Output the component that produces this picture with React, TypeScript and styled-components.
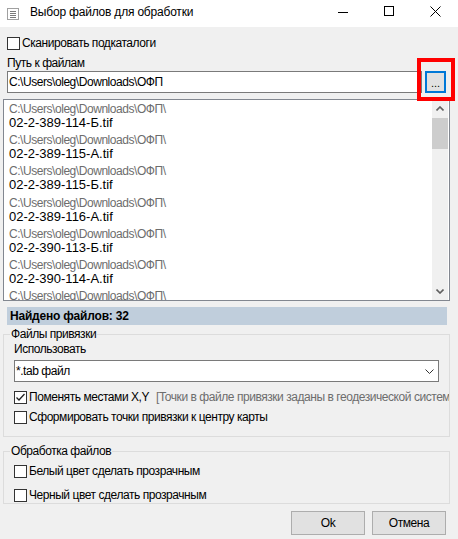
import React from 'react';
import styled, { createGlobalStyle } from 'styled-components';

const Global = createGlobalStyle`
  html, body { margin: 0; padding: 0; background: #f0f0f0; }
  body {
    font-family: 'Liberation Sans', Arial, sans-serif;
    font-size: 12px;
    color: #000;
    letter-spacing: -0.45px;
  }
  * { box-sizing: border-box; }
`;

const Window = styled.div`
  position: relative;
  width: 458px;
  height: 539px;
  background: #f0f0f0;
  overflow: hidden;
  display: flex;
  flex-direction: column;
`;

const TitleBar = styled.div`
  height: 27px;
  background: #fff;
  display: flex;
  align-items: flex-start;
  flex: none;
`;

const TitleIcon = styled.svg`
  flex: none;
  margin: 8px 0 0 7px;
`;

const TitleText = styled.div`
  flex: 1;
  margin: 5px 0 0 11px;
  line-height: 15px;
  font-size: 12px;
  letter-spacing: -0.2px;
`;

const WinButton = styled.div`
  width: 46px;
  height: 22px;
  display: flex;
  align-items: center;
  justify-content: center;
  flex: none;
`;

const Body = styled.div`
  flex: 1;
  display: flex;
  flex-direction: column;
  padding: 9px 8px 0 3px;
`;

const CheckRow = styled.div<{ $indent?: number; $top?: number }>`
  display: flex;
  align-items: center;
  height: 15px;
  gap: 2px;
  margin-left: ${(p) => p.$indent ?? 0}px;
  margin-top: ${(p) => p.$top ?? 0}px;
  white-space: nowrap;
`;

const Box = styled.div`
  width: 13px;
  height: 13px;
  flex: none;
  border: 1px solid #333;
  background: #fff;
  display: flex;
  align-items: center;
  justify-content: center;
`;

const WideRow = styled(CheckRow)`
  margin-right: -10px;
  overflow: hidden;
`;

const CheckText = styled.span<{ $width?: number }>`
  line-height: 15px;
  ${(p) => (p.$width ? `flex: 0 0 ${p.$width}px;` : '')}
`;

const Hint = styled.span`
  color: #6d6d6d;
  line-height: 15px;
`;

const FieldLabel = styled.div`
  margin-top: 5px;
  padding-left: 4px;
  line-height: 15px;
`;

const InputRow = styled.div`
  display: flex;
  gap: 3px;
  padding: 0 4px;
  height: 22px;
`;

const PathInput = styled.div`
  flex: 1;
  border: 1px solid #7a7a7a;
  background: #fff;
  padding: 0 1px;
  line-height: 20px;
  white-space: nowrap;
`;

const BrowseButton = styled.div`
  width: 21px;
  height: 22px;
  flex: none;
  border: 2px solid #0078d7;
  background: #e1e1e1;
  display: flex;
  align-items: flex-end;
  justify-content: center;
  font-size: 11px;
  line-height: 14px;
  letter-spacing: 0;
  padding-bottom: 1px;
`;

const ListBox = styled.div`
  margin-top: 6px;
  height: 202px;
  border: 1px solid #828790;
  background: #fff;
  display: flex;
`;

const Items = styled.div`
  flex: 1;
  overflow: hidden;
  padding: 3px 0 0 5px;
`;

const Item = styled.div`
  padding-bottom: 4.2px;
`;

const ItemPath = styled.div`
  color: #6d6d6d;
  font-size: 12px;
  line-height: 12px;
  white-space: nowrap;
`;

const ItemName = styled.div`
  font-size: 13px;
  line-height: 15px;
  letter-spacing: 0;
  white-space: nowrap;
`;

const ScrollBar = styled.div`
  width: 16px;
  margin-right: 1px;
  background: #f0f0f0;
  display: flex;
  flex-direction: column;
`;

const ScrollArrow = styled.div`
  height: 17px;
  display: flex;
  align-items: center;
  justify-content: center;
  flex: none;
`;

const Thumb = styled.div`
  margin-top: 1px;
  height: 31px;
  background: #cdcdcd;
  flex: none;
`;

const Track = styled.div`
  flex: 1;
`;

const FoundBar = styled.div`
  margin: 6px 3px 0 4px;
  height: 18px;
  background: #c0cedc;
  font-weight: bold;
  line-height: 18px;
  padding-left: 3px;
  letter-spacing: -0.2px;
`;

const Group = styled.fieldset<{ $top: number; $bottom: number }>`
  margin: ${(p) => p.$top}px 0 0;
  padding: 0 10px ${(p) => p.$bottom}px;
  border: 1px solid #dcdcdc;
  min-width: 0;
`;

const Legend = styled.legend`
  padding: 0 1px;
  margin-left: -4px;
  line-height: 14px;
  font-size: 12px;
`;

const UseLabel = styled.div`
  margin-top: 1px;
  line-height: 14px;
`;

const Combo = styled.div`
  margin-top: 4px;
  height: 22px;
  border: 1px solid #7a7a7a;
  background: #fff;
  display: flex;
  align-items: center;
  justify-content: space-between;
  padding: 0 4px 0 1px;
  line-height: 20px;
`;

const ButtonRow = styled.div`
  margin-top: 7px;
  display: flex;
  justify-content: flex-end;
  gap: 7px;
  padding-right: 4px;
`;

const DialogButton = styled.div`
  width: 74px;
  height: 24px;
  border: 1px solid #adadad;
  background: #e1e1e1;
  display: flex;
  align-items: center;
  justify-content: center;
  line-height: 22px;
`;

const Highlight = styled.div`
  position: absolute;
  left: 417px;
  top: 58px;
  width: 38px;
  height: 43px;
  border: 4px solid #ff0000;
  pointer-events: none;
`;

const Check = ({ checked }: { checked?: boolean }) => (
  <Box>
    {checked && (
      <svg width="11" height="11" viewBox="0 0 11 11">
        <polyline points="1.5,5.5 4,8 9.5,2" fill="none" stroke="#222" strokeWidth="1.3" />
      </svg>
    )}
  </Box>
);

const PATH = 'C:\\Users\\oleg\\Downloads\\ОФП\\';
const FILES = [
  '02-2-389-114-Б.tif',
  '02-2-389-115-А.tif',
  '02-2-389-115-Б.tif',
  '02-2-389-116-А.tif',
  '02-2-390-113-Б.tif',
  '02-2-390-114-А.tif',
];

export default function App() {
  return (
    <>
      <Global />
      <Window>
        <TitleBar>
          <TitleIcon width="12" height="12" viewBox="0 0 12 12">
            <rect x="0.5" y="0.5" width="11" height="11" fill="#fff" stroke="#a0a0a0" />
            <line x1="3" y1="3.5" x2="9" y2="3.5" stroke="#7a7a7a" />
            <line x1="3" y1="5.5" x2="9" y2="5.5" stroke="#7a7a7a" />
            <line x1="3" y1="7.5" x2="9" y2="7.5" stroke="#7a7a7a" />
            <line x1="3" y1="9.5" x2="9" y2="9.5" stroke="#7a7a7a" />
          </TitleIcon>
          <TitleText>Выбор файлов для обработки</TitleText>
          <WinButton>
            <svg width="10" height="10" viewBox="0 0 10 10">
              <line x1="0" y1="6.5" x2="10" y2="6.5" stroke="#000" />
            </svg>
          </WinButton>
          <WinButton>
            <svg width="10" height="10" viewBox="0 0 10 10">
              <rect x="0.5" y="0.5" width="9" height="9" fill="none" stroke="#000" />
            </svg>
          </WinButton>
          <WinButton>
            <svg width="11" height="11" viewBox="0 0 11 11">
              <line x1="0.5" y1="0.5" x2="10.5" y2="10.5" stroke="#000" />
              <line x1="10.5" y1="0.5" x2="0.5" y2="10.5" stroke="#000" />
            </svg>
          </WinButton>
        </TitleBar>
        <Body>
          <CheckRow $indent={4}>
            <Check />
            <CheckText>Сканировать подкаталоги</CheckText>
          </CheckRow>
          <FieldLabel>Путь к файлам</FieldLabel>
          <InputRow>
            <PathInput>C:\Users\oleg\Downloads\ОФП</PathInput>
            <BrowseButton>...</BrowseButton>
          </InputRow>
          <ListBox>
            <Items>
              {FILES.map((f) => (
                <Item key={f}>
                  <ItemPath>{PATH}</ItemPath>
                  <ItemName>{f}</ItemName>
                </Item>
              ))}
              <ItemPath>{PATH}</ItemPath>
            </Items>
            <ScrollBar>
              <ScrollArrow>
                <svg width="8" height="5" viewBox="0 0 8 5">
                  <polyline points="0.5,4.5 4,1 7.5,4.5" fill="none" stroke="#606060" strokeWidth="1.6" />
                </svg>
              </ScrollArrow>
              <Thumb />
              <Track />
              <ScrollArrow>
                <svg width="8" height="5" viewBox="0 0 8 5">
                  <polyline points="0.5,0.5 4,4 7.5,0.5" fill="none" stroke="#606060" strokeWidth="1.6" />
                </svg>
              </ScrollArrow>
            </ScrollBar>
          </ListBox>
          <FoundBar>Найдено файлов: 32</FoundBar>
          <Group $top={2} $bottom={11}>
            <Legend>Файлы привязки</Legend>
            <UseLabel>Использовать</UseLabel>
            <Combo>
              <span>*.tab файл</span>
              <svg width="9" height="5" viewBox="0 0 9 5">
                <polyline points="0.5,0.5 4.5,4.5 8.5,0.5" fill="none" stroke="#333" strokeWidth="1" />
              </svg>
            </Combo>
            <WideRow $top={8}>
              <Check checked />
              <CheckText $width={125}>Поменять местами X,Y</CheckText>
              <Hint>[Точки в файле привязки заданы в геодезической системе координат]</Hint>
            </WideRow>
            <CheckRow $top={5}>
              <Check />
              <CheckText>Сформировать точки привязки к центру карты</CheckText>
            </CheckRow>
          </Group>
          <Group $top={7} $bottom={0}>
            <Legend>Обработка файлов</Legend>
            <CheckRow $top={6}>
              <Check />
              <CheckText>Белый цвет сделать прозрачным</CheckText>
            </CheckRow>
            <CheckRow $top={9}>
              <Check />
              <CheckText>Черный цвет сделать прозрачным</CheckText>
            </CheckRow>
          </Group>
          <ButtonRow>
            <DialogButton>Ok</DialogButton>
            <DialogButton>Отмена</DialogButton>
          </ButtonRow>
        </Body>
        <Highlight />
      </Window>
    </>
  );
}
